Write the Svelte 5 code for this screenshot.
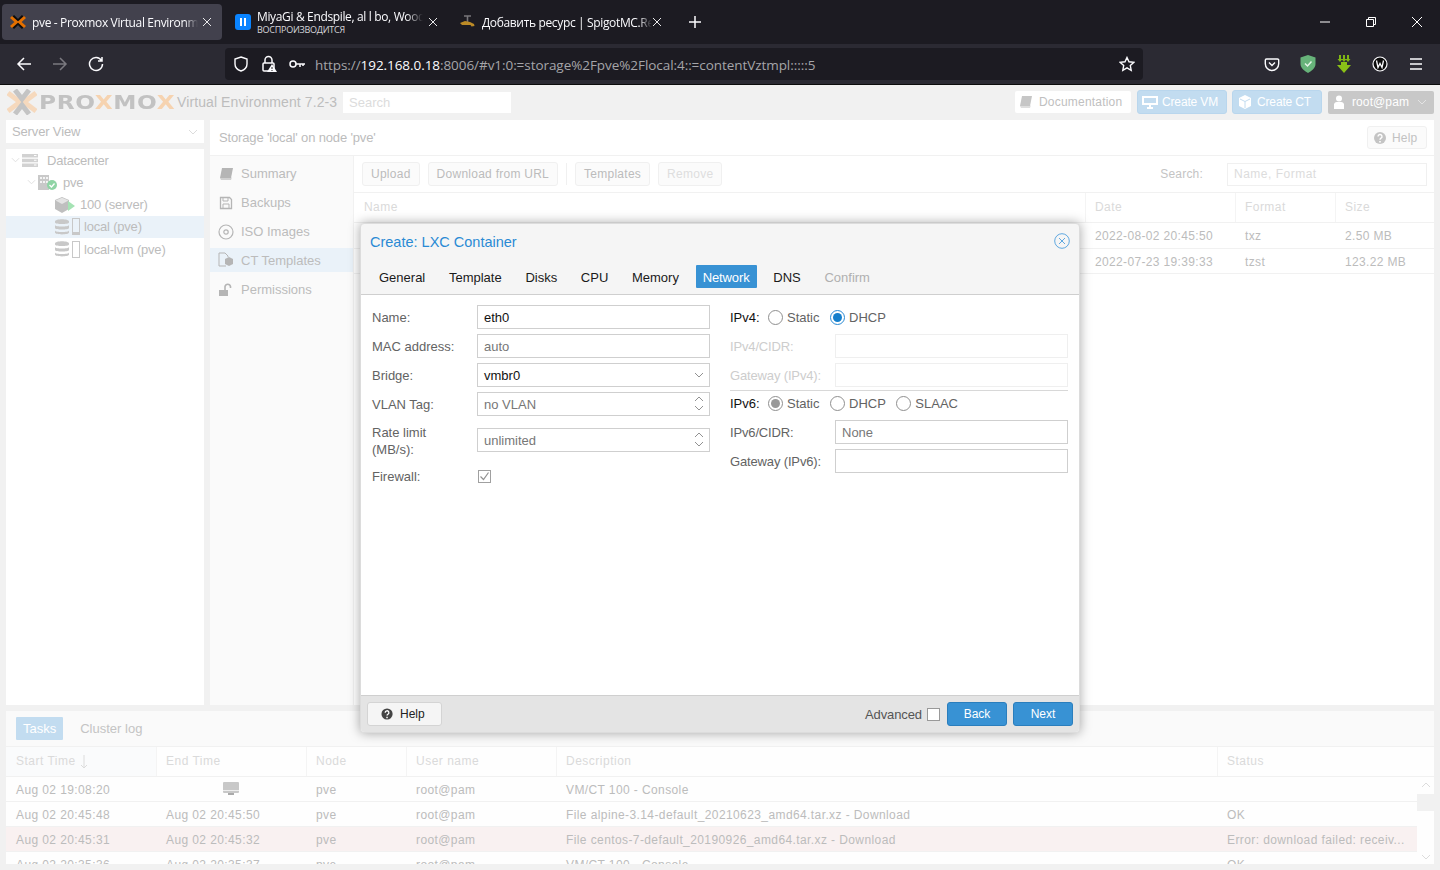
<script>
  const navItems = [
    { t: 'Summary', i: 'book' }, { t: 'Backups', i: 'save' }, { t: 'ISO Images', i: 'disc' },
    { t: 'CT Templates', i: 'tpl', on: true }, { t: 'Permissions', i: 'unlock' }
  ];
  const tasks = [
    ['Aug 02 19:08:20', '', 'pve', 'root@pam', 'VM/CT 100 - Console', '', ''],
    ['Aug 02 20:45:48', 'Aug 02 20:45:50', 'pve', 'root@pam', 'File alpine-3.14-default_20210623_amd64.tar.xz - Download', 'OK', ''],
    ['Aug 02 20:45:31', 'Aug 02 20:45:32', 'pve', 'root@pam', 'File centos-7-default_20190926_amd64.tar.xz - Download', 'Error: download failed: receiv...', 'err'],
    ['Aug 02 20:35:36', 'Aug 02 20:35:37', 'pve', 'root@pam', 'VM/CT 100 - Console', 'OK', '']
  ];
  const tabs = ['General', 'Template', 'Disks', 'CPU', 'Memory', 'Network', 'DNS', 'Confirm'];
</script>

<div class="root">
  <div class="tabstrip">
    <div class="tab active">
      <svg class="fav" viewBox="0 0 16 14"><path d="M3 1l5 5 5-5M3 13l5-5 5 5" fill="none" stroke="#0d0d0d" stroke-width="3"/><path d="M1 2l5.500 5L1 12M15 2L9.500 7l5.500 5" fill="none" stroke="#e57000" stroke-width="3"/></svg>
      <span class="tabtext">pve - Proxmox Virtual Environment</span>
      <svg class="x" viewBox="0 0 10 10"><path d="M1 1l8 8M9 1L1 9" stroke="#e8e8ea"/></svg>
    </div>
    <div class="tab two">
      <svg class="fav" viewBox="0 0 16 16"><rect width="16" height="16" rx="3" fill="#0a84ff"/><path d="M5 4h2v8H5zM9 4h2v8H9z" fill="#fff"/></svg>
      <div class="tabcol">
        <span class="tabtext">MiyaGi &amp; Endspile, al l bo, Woodie</span>
        <span class="sub">ВОСПРОИЗВОДИТСЯ</span>
      </div>
      <svg class="x" viewBox="0 0 10 10"><path d="M1 1l8 8M9 1L1 9" stroke="#e8e8ea"/></svg>
    </div>
    <div class="tab three">
      <svg class="fav" viewBox="0 0 16 14"><path d="M5 1h7M8.500 1v6" fill="none" stroke="#77767a" stroke-width="1.600"/><path d="M1 8l5-2 5 1 4 2 .5 2-3 .5-1-1.500H3z" fill="#bb8a26"/></svg>
      <span class="tabtext">Добавить ресурс | SpigotMC.Resource</span>
      <svg class="x" viewBox="0 0 10 10"><path d="M1 1l8 8M9 1L1 9" stroke="#e8e8ea"/></svg>
    </div>
    <svg class="plus" viewBox="0 0 14 14"><path d="M7 1v12M1 7h12" stroke="#fbfbfe" stroke-width="1.5"/></svg>
    <div class="winbtns">
      <svg viewBox="0 0 12 12"><path d="M1 6h10" stroke="#fff"/></svg>
      <svg viewBox="0 0 12 12"><path d="M1.5 3.5h7v7h-7zM3.5 3.5v-2h7v7h-2" fill="none" stroke="#fff"/></svg>
      <svg viewBox="0 0 12 12"><path d="M1 1l10 10M11 1L1 11" stroke="#fff"/></svg>
    </div>
  </div>

  <div class="navbar">
    <div class="navleft">
      <svg viewBox="0 0 16 16"><path d="M15 8H2M8 2L2 8l6 6" fill="none" stroke="#fbfbfe" stroke-width="1.5"/></svg>
      <svg viewBox="0 0 16 16"><path d="M1 8h13M8 2l6 6-6 6" fill="none" stroke="#7b7a80" stroke-width="1.5"/></svg>
      <svg viewBox="0 0 16 16"><path d="M13.5 4.5A6.5 6.5 0 1 0 14.5 8M14 1v4h-4" fill="none" stroke="#fbfbfe" stroke-width="1.5"/></svg>
    </div>
    <div class="urlbar">
      <svg class="u1" viewBox="0 0 16 16"><path d="M8 1l6 2v5c0 3.500-3 6-6 7-3-1-6-3.500-6-7V3z" fill="none" stroke="#fbfbfe" stroke-width="1.4"/></svg>
      <svg class="u2" viewBox="0 0 16 18"><path d="M4 8V5a3.500 3.500 0 0 1 7 0v3" fill="none" stroke="#fbfbfe" stroke-width="1.5"/><rect x="2" y="8" width="11" height="8" rx="1" fill="none" stroke="#fbfbfe" stroke-width="1.5"/><path d="M11 9l5 8H6z" fill="#fbfbfe"/><path d="M11 12v2M11 15v1" stroke="#222" /></svg>
      <svg class="u3" viewBox="0 0 16 10"><circle cx="4" cy="5" r="3" fill="none" stroke="#fbfbfe" stroke-width="1.5"/><path d="M7 5h9M11 5v3M14 5v2" stroke="#fbfbfe" stroke-width="1.5"/></svg>
      <div class="url">https://<b>192.168.0.18</b>:8006/#v1:0:=storage%2Fpve%2Flocal:4::=contentVztmpl:::::5</div>
      <svg class="star" viewBox="0 0 16 16"><path d="M8 1.500l2 4.300 4.700.6-3.400 3.200.9 4.700L8 11.900l-4.200 2.400.9-4.700L1.300 6.400 6 5.800z" fill="none" stroke="#fbfbfe" stroke-width="1.400"/></svg>
    </div>
    <div class="navright">
      <svg viewBox="0 0 16 16"><path d="M2.500 3h11a1.200 1.200 0 0 1 1.200 1.200v3.600a6.700 6.700 0 0 1-13.400 0V4.200A1.200 1.200 0 0 1 2.500 3z" fill="none" stroke="#fbfbfe" stroke-width="1.400"/><path d="M5 6.500l3 3 3-3" fill="none" stroke="#fbfbfe" stroke-width="1.400"/></svg>
      <svg class="tallic" viewBox="0 0 16 18"><path d="M8 0l7.500 2.500V9c0 4-4.500 7.500-7.500 9-3-1.500-7.500-5-7.500-9V2.500z" fill="#67b37a"/><path d="M5 8.500l2.500 2.500L11.500 6.500" fill="none" stroke="#e4f4e7" stroke-width="1.500"/></svg>
      <svg class="tallic" viewBox="0 0 16 18"><path d="M3 0h2v4h1.500L4 7 1.500 4H3zM7 0h2v4h1.500L8 7 5.500 4H7zM11 0h2v4h1.500L12 7 9.500 4H11z" fill="#7fb514"/><path d="M5 7h6v3h4l-7 8-7-8h4z" fill="#8ac017"/></svg>
      <svg viewBox="0 0 16 16"><circle cx="8" cy="8" r="7" fill="#0b0b0b" stroke="#fbfbfe" stroke-width="1.200"/><path d="M4.500 4.500l1.500 7 2-4 2 4 1.500-7" fill="none" stroke="#fbfbfe" stroke-width="1.300"/></svg>
      <svg viewBox="0 0 16 16"><path d="M2 3h12M2 8h12M2 13h12" stroke="#fbfbfe" stroke-width="1.500"/></svg>
    </div>
  </div>

  <div class="app">
    <header class="head">
      <svg class="bigx" viewBox="0 0 30 26"><path d="M1 4l12 9-12 9M29 4l-12 9 12 9" fill="none" stroke="#f6d9bd" stroke-width="5"/><path d="M8 1l7 9 7-9M8 25l7-9 7 9" fill="none" stroke="#c4c4c4" stroke-width="5"/></svg>
      <div class="logobox"><div class="logo">PRO<i>X</i>MO<i>X</i></div></div>
      <div class="ver">Virtual Environment 7.2-3</div>
      <div class="hsearch">Search</div>
      <div class="spacer"></div>
      <div class="docbtn">
        <svg viewBox="0 0 14 14"><path d="M3 1h10l-2 10H1z" fill="#c6c6c6"/><path d="M1 11h10l1-1-1 3H2z" fill="#dedede"/></svg>
        Documentation
      </div>
      <div class="bluebtn cvm">
        <svg viewBox="0 0 16 14"><path d="M0 1h16v9H0z" fill="#fff"/><path d="M2 3h12v5H2z" fill="#c2dcf0"/><path d="M5 12h6v2H5zM7 10h2v2H7z" fill="#fff"/></svg>
        Create VM
      </div>
      <div class="bluebtn cct">
        <svg viewBox="0 0 14 14"><path d="M7 0l6 3v8l-6 3-6-3V3z" fill="#fff"/><path d="M7 6.500L2 4M7 6.500l5-2.500M7 6.500V13" stroke="#c2dcf0"/></svg>
        Create CT
      </div>
      <div class="userbtn">
        <svg viewBox="0 0 12 14"><circle cx="6" cy="3.500" r="3" fill="#fff"/><path d="M1 14V9a3 3 0 0 1 3-2h4a3 3 0 0 1 3 2v5z" fill="#fff"/></svg>
        root@pam
        <svg class="chev" viewBox="0 0 10 6"><path d="M1 1l4 4 4-4" fill="none" stroke="#e4e4e4"/></svg>
      </div>
    </header>

    <div class="main">
      <aside class="side">
        <div class="viewsel">Server View<svg viewBox="0 0 10 6"><path d="M1 1l4 4 4-4" fill="none" stroke="#dcdcdc"/></svg></div>
        <div class="tree">
          <div class="node n0">
            <svg class="tw" viewBox="0 0 10 6"><path d="M1 1l4 4 4-4" fill="none" stroke="#ddd"/></svg>
            <svg class="ic" viewBox="0 0 16 13"><path d="M0 0h16v3.500H0zM0 4.700h16v3.500H0zM0 9.400h16v3.500H0z" fill="#d2d2d2"/><path d="M12 1h2.500v1H12zM12 5.700h2.500v1H12zM12 10.400h2.500v1H12z" fill="#fff"/></svg>
            <span class="dc">Datacenter</span>
          </div>
          <div class="node n1">
            <svg class="tw" viewBox="0 0 10 6"><path d="M1 1l4 4 4-4" fill="none" stroke="#ddd"/></svg>
            <svg class="ic pv" viewBox="0 0 20 16"><path d="M0 1h11v15H0z" fill="#c9c9c9"/><path d="M2 3h2v2H2zM5 3h2v2H5zM8 3h2v2H8zM2 7h2v2H2zM5 7h2v2H5zM8 7h2v2H8z" fill="#f4f4f4"/><circle cx="14" cy="11" r="5" fill="#8fd4a5"/><path d="M11.500 11l2 2 3-3.500" fill="none" stroke="#fff" stroke-width="1.300"/></svg>
            <span>pve</span>
          </div>
          <div class="node n2">
            <svg class="ic" viewBox="0 0 22 16"><path d="M8 0l7 3v9l-7 4-7-4V3z" fill="#bfbfbf"/><path d="M8 7L1.500 3.500 8 .8l6.500 2.700z" fill="#e4e4e4"/><path d="M14 4l7 5-7 5z" fill="#a5e3b4"/></svg>
            <span>100 (server)</span>
          </div>
          <div class="node n3 sel">
            <svg class="ic" viewBox="0 0 14 16"><path d="M0 2.500c0-3 14-3 14 0v1c0 2-14 2-14 0zM0 6c0 2 14 2 14 0v3c0 2-14 2-14 0zM0 11.500c0 2 14 2 14 0v2c0 2.500-14 2.500-14 0z" fill="#c8c8c8"/></svg>
            <span class="st"><span class="fill"></span></span>
            <span>local (pve)</span>
          </div>
          <div class="node n3">
            <svg class="ic" viewBox="0 0 14 16"><path d="M0 2.500c0-3 14-3 14 0v1c0 2-14 2-14 0zM0 6c0 2 14 2 14 0v3c0 2-14 2-14 0zM0 11.500c0 2 14 2 14 0v2c0 2.500-14 2.500-14 0z" fill="#c8c8c8"/></svg>
            <span class="st"></span>
            <span>local-lvm (pve)</span>
          </div>
        </div>
      </aside>

      <section class="center">
        <div class="titlebar">
          <span>Storage 'local' on node 'pve'</span>
          <div class="helpbtn">
            <svg viewBox="0 0 14 14"><circle cx="7" cy="7" r="6" fill="#c4c4c4"/><path d="M5 5.500a2 2 0 1 1 3 1.700c-.7.400-1 .8-1 1.500" fill="none" stroke="#fff" stroke-width="1.400"/><path d="M6.200 10h1.600v1.500H6.200z" fill="#fff"/></svg>
            Help
          </div>
        </div>
        <div class="body">
          <nav class="snav">
            {#each navItems as n}
              <div class="sitem" class:on={n.on}>
                <svg viewBox="0 0 16 16">
                  {#if n.i === 'book'}
                    <path d="M4 2h11l-2 10H2z" fill="#b5b5b5"/><path d="M2 12h11l1-1-1 3H3z" fill="#d0d0d0"/>
                  {:else if n.i === 'save'}
                    <path d="M2.500 2.500h9l2 2v9h-11z" fill="none" stroke="#b5b5b5" stroke-width="1.300"/><path d="M5 3v3h5V3M5 13V9h6v4" fill="none" stroke="#b5b5b5"/>
                  {:else if n.i === 'disc'}
                    <circle cx="8" cy="8" r="7" fill="none" stroke="#b5b5b5" stroke-width="1.200"/><circle cx="8" cy="8" r="2.200" fill="none" stroke="#b5b5b5" stroke-width="1.200"/>
                  {:else if n.i === 'tpl'}
                    <path d="M1 1h6l3 3v1M1 1v13h7" fill="none" stroke="#b5b5b5"/><path d="M11 5l4 2v5l-4 2-4-2V7z" fill="#b5b5b5"/>
                  {:else}
                    <path d="M1 8h9v6H1z" fill="#b5b5b5"/><path d="M7 8V4.500a2.800 2.800 0 0 1 5.500 0V6" fill="none" stroke="#b5b5b5" stroke-width="1.600"/>
                  {/if}
                </svg>
                <span>{n.t}</span>
              </div>
            {/each}
          </nav>
          <div class="store">
            <div class="tools">
              <div class="tbtn">Upload</div>
              <div class="tbtn">Download from URL</div>
              <div class="tsep"></div>
              <div class="tbtn">Templates</div>
              <div class="tbtn dim">Remove</div>
              <div class="spacer"></div>
              <span class="slabel">Search:</span>
              <div class="sfield">Name, Format</div>
            </div>
            <div class="sgrid ghead"><div>Name</div><div>Date</div><div>Format</div><div>Size</div></div>
            <div class="sgrid grow"><div></div><div>2022-08-02 20:45:50</div><div>txz</div><div>2.50 MB</div></div>
            <div class="sgrid grow"><div></div><div>2022-07-23 19:39:33</div><div>tzst</div><div>123.22 MB</div></div>
          </div>
        </div>
      </section>
    </div>

    <section class="tasks">
      <div class="ttabs"><span class="ttab on">Tasks</span><span class="ttab">Cluster log</span></div>
      <div class="tgrid thead">
        <div class="sorted">Start Time <svg viewBox="0 0 8 14"><path d="M4 0v13M1 10l3 3 3-3" fill="none" stroke="#dcdcdc"/></svg></div>
        <div>End Time</div><div>Node</div><div>User name</div><div>Description</div><div>Status</div>
      </div>
      <div class="tbody">
        <div class="rows">
          {#each tasks as r, i}
            <div class="tgrid trow" class:err={r[6] === 'err'}>
              <div>{r[0]}</div>
              <div class="endc">
                {#if i === 0}
                  <svg class="mon" viewBox="0 0 16 14"><path d="M1 0h14a1 1 0 0 1 1 1v9a1 1 0 0 1-1 1H1a1 1 0 0 1-1-1V1a1 1 0 0 1 1-1z" fill="#c8c8c8"/><path d="M0 8.500h16" stroke="#eee"/><path d="M5 11h6v2H5z" fill="#aaa"/></svg>
                {:else}{r[1]}{/if}
              </div>
              <div>{r[2]}</div><div>{r[3]}</div><div>{r[4]}</div><div>{r[5]}</div>
            </div>
          {/each}
        </div>
        <div class="sbar">
          <svg viewBox="0 0 10 6"><path d="M1 5l4-4 4 4" fill="none" stroke="#dcdcdc"/></svg>
          <div class="thumb"></div>
          <div class="spacer"></div>
          <svg viewBox="0 0 10 6"><path d="M1 1l4 4 4-4" fill="none" stroke="#dcdcdc"/></svg>
        </div>
      </div>
    </section>
  </div>

  <div class="modal">
    <div class="mtitle">
      <span>Create: LXC Container</span>
      <svg viewBox="0 0 16 16"><circle cx="8" cy="8" r="7.300" fill="none" stroke="#5fa8e0"/><path d="M5 5l6 6M11 5l-6 6" stroke="#5fa8e0"/></svg>
    </div>
    <div class="mtabs">
      {#each tabs as t}
        <span class="mtab" class:on={t === 'Network'} class:off={t === 'Confirm'}>{t}</span>
      {/each}
    </div>
    <div class="mbody">
      <div class="col left">
        <div class="frow"><label>Name:</label><div class="inp dark">eth0</div></div>
        <div class="frow"><label>MAC address:</label><div class="inp">auto</div></div>
        <div class="frow"><label>Bridge:</label><div class="inp dark">vmbr0<svg class="dn" viewBox="0 0 10 6"><path d="M1 1l4 4 4-4" fill="none" stroke="#919191"/></svg></div></div>
        <div class="frow"><label>VLAN Tag:</label><div class="inp">no VLAN<svg class="spin" viewBox="0 0 10 15"><path d="M1 5l4-4 4 4M1 10l4 4 4-4" fill="none" stroke="#919191"/></svg></div></div>
        <div class="frow tall"><label>Rate limit<br>(MB/s):</label><div class="inp">unlimited<svg class="spin" viewBox="0 0 10 15"><path d="M1 5l4-4 4 4M1 10l4 4 4-4" fill="none" stroke="#919191"/></svg></div></div>
        <div class="frow fw"><label>Firewall:</label><svg class="chk" viewBox="0 0 13 13"><rect x=".5" y=".5" width="12" height="12" fill="#fff" stroke="#a0a0a0"/><path d="M2.500 6.500l3 3 5-7" fill="none" stroke="#919191" stroke-width="1.200"/></svg></div>
      </div>
      <div class="col right">
        <div class="rrow">
          <span class="iplab">IPv4:</span>
          <span class="radio"></span><span class="rt">Static</span>
          <span class="radio blue"></span><span class="rt">DHCP</span>
        </div>
        <div class="frow2 dis"><label>IPv4/CIDR:</label><div class="inp2"></div></div>
        <div class="frow2 dis"><label>Gateway (IPv4):</label><div class="inp2"></div></div>
        <div class="hr"></div>
        <div class="rrow six">
          <span class="iplab">IPv6:</span>
          <span class="radio gray"></span><span class="rt">Static</span>
          <span class="radio"></span><span class="rt">DHCP</span>
          <span class="radio"></span><span class="rt">SLAAC</span>
        </div>
        <div class="frow2"><label>IPv6/CIDR:</label><div class="inp2">None</div></div>
        <div class="frow2"><label>Gateway (IPv6):</label><div class="inp2"></div></div>
      </div>
    </div>
    <div class="mfoot">
      <div class="mhelp">
        <svg viewBox="0 0 14 14"><circle cx="6.500" cy="6.500" r="6" fill="#444"/><path d="M4.500 5a2 2 0 1 1 3 1.700c-.7.400-1 .8-1 1.500" fill="none" stroke="#fff" stroke-width="1.400"/><path d="M5.700 9.500h1.600V11H5.700z" fill="#fff"/></svg>
        Help
      </div>
      <div class="spacer"></div>
      <span class="adv">Advanced</span>
      <span class="advbox"></span>
      <div class="pbtn back">Back</div>
      <div class="pbtn">Next</div>
    </div>
  </div>
</div>

<style>
  :global(body) { margin: 0; background: #f1f1f1; }
  .root { position: relative; width: 1440px; height: 870px; overflow: hidden; font-family: "Liberation Sans", Arial, sans-serif; font-size: 13px; }
  svg { display: block; flex: none; }
  .spacer { flex: 1; }

  .tabstrip { height: 44px; background: #1c1b22; display: flex; align-items: center; box-sizing: border-box; font-family: "Open Sans", sans-serif; color: #fbfbfe; font-size: 12px; }
  .tab { height: 36px; box-sizing: border-box; display: flex; align-items: center; position: relative; }
  .tab.active { margin-left: 2px; width: 220px; background: #42414d; border-radius: 4px; padding-left: 8px; }
  .tab.two { width: 227px; padding-left: 13px; }
  .tab.three { width: 222px; padding-left: 10px; }
  .fav { width: 16px; height: 16px; margin-right: 6px; }
  .tab.three .fav { margin-right: 7px; }
  .tabtext { display: block; white-space: nowrap; overflow: hidden; letter-spacing: -.35px; }
  .active .tabtext { width: 166px; -webkit-mask-image: linear-gradient(90deg, #000 92%, transparent); mask-image: linear-gradient(90deg, #000 92%, transparent); }
  .two .tabtext { width: 166px; line-height: 14px; -webkit-mask-image: linear-gradient(90deg, #000 90%, transparent); mask-image: linear-gradient(90deg, #000 90%, transparent); }
  .three .tabtext { width: 170px; letter-spacing: -.35px; -webkit-mask-image: linear-gradient(90deg, #000 92%, transparent); mask-image: linear-gradient(90deg, #000 92%, transparent); }
  .tabcol { display: flex; flex-direction: column; }
  .sub { font-size: 9px; line-height: 11px; letter-spacing: -.25px; color: #d5d5d9; }
  .x { width: 10px; height: 10px; margin-left: 4px; }
  .two .x { margin-left: 5px; }
  .three .x { margin-left: 0; }
  .plus { width: 14px; height: 14px; margin-left: 17px; }
  .winbtns { margin-left: auto; display: flex; gap: 34px; padding-right: 17px; }
  .winbtns svg { width: 12px; height: 12px; }

  .navbar { height: 40px; background: #2b2a33; display: flex; align-items: center; border-bottom: 1px solid #0c0c0d; box-sizing: content-box; }
  .navleft { display: flex; gap: 20px; padding-left: 16px; width: 225px; box-sizing: border-box; }
  .navleft svg { width: 16px; height: 16px; }
  .urlbar { width: 918px; height: 32px; background: #1c1b22; border-radius: 4px; display: flex; align-items: center; box-sizing: border-box; padding-left: 8px; color: #a5a5a9; font-family: "Open Sans", sans-serif; font-size: 13.500px; }
  .u1 { width: 16px; height: 16px; margin-right: 12px; }
  .u2 { width: 16px; height: 18px; margin-right: 12px; }
  .u3 { width: 16px; height: 10px; margin-right: 10px; }
  .url { white-space: nowrap; letter-spacing: -.06px; flex: 1; padding-top: 1px; }
  .url b { font-weight: 400; color: #fbfbfe; }
  .star { width: 16px; height: 16px; margin-right: 8px; }
  .navright { display: flex; gap: 20px; margin-left: 121px; align-items: center; }
  .navright svg { width: 16px; height: 16px; }
  .navright .tallic { height: 18px; }

  .app { height: 785px; background: #f1f1f1; color: #b9b9b9; display: flex; flex-direction: column; }
  .head { height: 34px; display: flex; align-items: center; padding: 0 6px 0 7px; box-sizing: border-box; }
  .bigx { width: 30px; height: 26px; margin-right: 3px; }
  .logobox { width: 137px; flex: none; overflow: visible; }
  .logo { font-family: "DejaVu Sans", sans-serif; font-weight: 700; font-size: 19px; color: #c2c2c2; letter-spacing: .5px; width: 110px; margin-left: -1px; white-space: nowrap; transform: scaleX(1.225); transform-origin: left; }
  .logo i { font-style: normal; color: #f6d3b0; }
  .ver { font-size: 14px; color: #bdbdbd; width: 166px; white-space: nowrap; letter-spacing: .1px; }
  .hsearch { width: 168px; height: 21px; background: #fff; color: #dcdcdc; font-size: 13px; line-height: 21px; padding-left: 6px; box-sizing: border-box; }
  .docbtn { height: 22px; width: 116px; background: #fff; border-radius: 2px; display: flex; align-items: center; gap: 6px; padding-left: 4px; box-sizing: border-box; color: #c0c0c0; font-size: 12px; letter-spacing: .2px; margin-right: 6px; }
  .docbtn svg { width: 14px; height: 14px; }
  .bluebtn { height: 24px; width: 90px; background: #c2dcf0; border: 1px solid #b9d6ed; border-radius: 3px; box-sizing: border-box; display: flex; align-items: center; gap: 4px; padding-left: 4px; color: #fff; font-size: 12px; letter-spacing: -.15px; margin-right: 5px; white-space: nowrap; }
  .bluebtn svg { width: 16px; height: 14px; }
  .cct { margin-right: 6px; }
  .userbtn { height: 23px; width: 106px; background: #c8c8c8; border-radius: 2px; display: flex; align-items: center; gap: 7px; padding-left: 5px; box-sizing: border-box; color: #fff; font-size: 12px; letter-spacing: .1px; }
  .userbtn svg { width: 12px; height: 14px; }
  .userbtn .chev { width: 10px; height: 6px; margin-left: 1px; }

  .main { height: 586px; display: flex; padding: 1px 6px 0 6px; gap: 6px; box-sizing: border-box; }
  .side { width: 198px; display: flex; flex-direction: column; gap: 6px; }
  .viewsel { height: 23px; background: #fff; display: flex; align-items: center; justify-content: space-between; padding: 0 6px; box-sizing: border-box; color: #bcbcbc; letter-spacing: -.15px; }
  .viewsel svg { width: 10px; height: 6px; }
  .tree { flex: 1; background: #fff; color: #bcbcbc; height: 556px; letter-spacing: -.2px; }
  .node { height: 22.250px; display: flex; align-items: center; white-space: nowrap; }
  .tree .tw { width: 9px; height: 6px; }
  .n0 { padding-left: 5px; }
  .n0 .ic { width: 16px; height: 13px; margin: 0 9px 0 2px; }
  .n1 { padding-left: 21px; }
  .n1 .ic { width: 20px; height: 16px; margin: 0 5px 0 2px; }
  .n2 { padding-left: 48px; }
  .n2 .ic { width: 22px; height: 16px; margin-right: 4px; }
  .n3 { padding-left: 49px; }
  .n3 .ic { width: 14px; height: 16px; margin-right: 3px; }
  .sel { background: #eaf2f9; }
  .st { width: 6px; height: 15px; border: 1px solid #c8c8c8; margin-right: 4px; position: relative; display: block; box-sizing: content-box; }
  .fill { position: absolute; left: 0; right: 0; bottom: 0; height: 2px; background: #c8c8c8; }

  .center { flex: 1; background: #fff; display: flex; flex-direction: column; min-width: 0; }
  .titlebar { height: 36px; display: flex; align-items: center; justify-content: space-between; padding: 0 7px 0 9px; border-bottom: 1px solid #f1f1f1; box-sizing: border-box; font-size: 13px; color: #bcbcbc; letter-spacing: -.15px; }
  .helpbtn { width: 60px; height: 23px; border: 1px solid #f0f0f0; border-radius: 3px; background: #fbfbfb; box-sizing: border-box; display: flex; align-items: center; gap: 5px; padding-left: 5px; font-size: 12px; letter-spacing: .2px; color: #c2c2c2; }
  .helpbtn svg { width: 14px; height: 14px; }
  .body { flex: 1; display: flex; }
  .snav { width: 144px; flex: none; background: #fafafa; border-right: 1px solid #f1f1f1; box-sizing: border-box; padding-top: 3px; }
  .sitem { height: 29px; display: flex; align-items: center; padding-left: 8px; gap: 7px; color: #bcbcbc; }
  .sitem svg { width: 16px; height: 16px; }
  .sitem.on { background: #eaf2f9; height: 24px; margin: 2px 0 3px; }
  .store { flex: 1; min-width: 0; }
  .tools { height: 37px; display: flex; align-items: center; padding: 0 7px 0 8px; gap: 8px; border-bottom: 1px solid #f1f1f1; box-sizing: border-box; }
  .tbtn { height: 24px; border: 1px solid #f0f0f0; border-radius: 3px; background: #fbfbfb; box-sizing: border-box; padding: 0 8px; line-height: 22px; font-size: 12px; letter-spacing: .26px; color: #bcbcbc; }
  .tbtn.dim { color: #dedede; }
  .tsep { width: 1px; height: 22px; background: #f0f0f0; }
  .slabel { color: #c4c4c4; font-size: 12px; letter-spacing: .2px; margin-right: 16px; }
  .sfield { width: 200px; height: 23px; border: 1px solid #f0f0f0; box-sizing: border-box; line-height: 21px; padding-left: 6px; color: #dcdcdc; font-size: 12px; letter-spacing: .5px; }
  .sgrid { display: grid; grid-template-columns: 731px 150px 100px 100px; }
  .sgrid > div { padding-left: 10px; box-sizing: border-box; white-space: nowrap; }
  .ghead { height: 30px; line-height: 29px; background: #fff; border-bottom: 1px solid #f1f1f1; box-sizing: border-box; color: #dadada; font-size: 12px; letter-spacing: .45px; }
  .ghead > div + div { border-left: 1px solid #f4f4f4; padding-left: 9px; }
  .grow { height: 25.500px; padding-top: 2px; line-height: 23px; border-bottom: 1px solid #f1f1f1; box-sizing: border-box; color: #bcbcbc; font-size: 12px; letter-spacing: .35px; }

  .tasks { margin: 6px 6px 0; height: 153px; background: #fefefe; overflow: hidden; display: flex; flex-direction: column; flex: none; }
  .ttabs { height: 36px; flex: none; background: #fafafa; border-bottom: 1px solid #f1f1f1; display: flex; align-items: center; padding: 0 0 0 10px; gap: 11px; box-sizing: border-box; }
  .ttab { height: 23px; padding: 0 6px; line-height: 23px; font-size: 13px; color: #c4c4c4; }
  .ttab.on { background: #c2dcf0; color: #fff; border-radius: 1px; padding: 0 7px; }
  .tgrid { display: grid; grid-template-columns: 150px 150px 100px 150px 661px 200px; }
  .tgrid > div { padding-left: 10px; box-sizing: border-box; white-space: nowrap; overflow: hidden; }
  .thead { height: 30px; flex: none; line-height: 29px; border-bottom: 1px solid #f1f1f1; box-sizing: border-box; color: #dadada; font-size: 12px; letter-spacing: .5px; padding-right: 17px; }
  .thead > div + div { border-left: 1px solid #f4f4f4; padding-left: 9px; }
  .sorted { background: #fafbfc; display: flex; align-items: center; gap: 4px; }
  .sorted svg { width: 8px; height: 14px; }
  .tbody { flex: 1; display: flex; min-height: 0; overflow: hidden; }
  .rows { width: 1411px; }
  .trow { height: 25px; padding-top: 2px; line-height: 22px; border-bottom: 1px solid #f1f1f1; box-sizing: border-box; color: #bcbcbc; font-size: 12px; letter-spacing: .4px; }
  .trow.err { background: #f9f1f1; }
  .endc { display: flex; align-items: center; justify-content: flex-start; }
  .mon { width: 16px; height: 14px; margin-left: 57px; margin-top: -3px; }
  .sbar { width: 17px; display: flex; flex-direction: column; align-items: center; padding: 5px 0 4px; box-sizing: border-box; }
  .sbar svg { width: 10px; height: 6px; }
  .thumb { width: 17px; height: 17px; background: #f1f1f1; margin-top: 6px; }

  .modal { position: absolute; left: 360px; top: 223px; width: 720px; height: 510px; background: #f5f5f5; border: 1px solid #dcdcdc; border-radius: 4px; box-shadow: 0 0 12px rgba(0, 0, 0, .35); box-sizing: border-box; display: flex; flex-direction: column; }
  .mtitle { height: 37px; padding: 0 9px 2px 9px; box-sizing: border-box; display: flex; align-items: center; justify-content: space-between; color: #2a8ad4; font-size: 14.500px; flex: none; }
  .mtitle svg { width: 16px; height: 16px; margin-top: -2px; }
  .mtabs { height: 33px; display: flex; align-items: flex-start; padding: 4px 0 0 11px; box-sizing: border-box; flex: none; }
  .mtab { height: 23px; line-height: 25px; padding: 0 7px; color: #1a1a1a; font-size: 13px; border-radius: 1px; margin-right: 9.700px; }
  .mtab.on { background: #3892d4; color: #fff; letter-spacing: -.1px; }
  .mtab.off { color: #b0b0b0; }
  .mbody { flex: 1; min-height: 0; background: #fff; border-top: 1px solid #cfcfcf; border-bottom: 1px solid #cfcfcf; display: flex; padding: 10px 10px 0 11px; box-sizing: border-box; color: #636363; }
  .col.left { width: 338px; margin-right: 20px; flex: none; }
  .col.right { width: 338px; flex: none; }
  .col.right label { letter-spacing: -.15px; }
  label { display: block; font-size: 13px; line-height: 17px; }
  .frow { height: 24px; display: grid; grid-template-columns: 105px 233px; align-items: center; margin-bottom: 5px; }
  .frow.tall { height: 36px; margin-top: 6px; margin-bottom: 6px; }
  .frow.tall label { padding-top: 2px; }
  .frow.fw { margin-bottom: 0; height: 24px; }
  .inp { height: 24px; border: 1px solid #cfcfcf; box-sizing: border-box; line-height: 24px; padding-left: 6px; font-size: 13px; color: #777; position: relative; }
  .inp.dark { color: #111; }
  .dn { position: absolute; right: 5px; top: 8px; width: 10px; height: 6px; }
  .spin { position: absolute; right: 5px; top: 3px; width: 10px; height: 15px; }
  .chk { width: 13px; height: 13px; margin-left: 1px; }
  .rrow { height: 24px; display: flex; align-items: center; font-size: 13px; }
  .iplab { color: #111; width: 38px; }
  .radio { width: 13px; height: 13px; border: 1px solid #8f8f8f; border-radius: 50%; background: #fff; margin-right: 4px; position: relative; display: block; }
  .rt { margin-right: 10.500px; }
  .radio.blue { border-color: #2a8ad4; }
  .radio.blue::after { content: ""; position: absolute; inset: 2px; border-radius: 50%; background: #157fcc; }
  .radio.gray::after { content: ""; position: absolute; inset: 2px; border-radius: 50%; background: #999; }
  .frow2 { height: 24px; display: grid; grid-template-columns: 105px 233px; align-items: center; margin-top: 5px; }
  .inp2 { height: 24px; border: 1px solid #cfcfcf; box-sizing: border-box; line-height: 23px; padding-left: 6px; font-size: 13px; color: #777; }
  .dis { color: #cdcdcd; }
  .dis .inp2 { border-color: #efefef; }
  .hr { height: 1px; background: #d8d8d8; margin-top: 3px; }
  .mfoot { height: 36px; flex: none; background: #e4e4e4; display: flex; align-items: center; padding: 0 6px; box-sizing: border-box; border-radius: 0 0 4px 4px; }
  .mhelp { width: 75px; height: 24px; background: #f5f5f5; border: 1px solid #d4d4d4; border-radius: 3px; box-sizing: border-box; display: flex; align-items: center; gap: 6px; padding-left: 13px; font-size: 12px; color: #222; }
  .mhelp svg { width: 13px; height: 13px; }
  .adv { color: #555; font-size: 13px; margin-right: 5px; letter-spacing: -.1px; }
  .advbox { width: 13px; height: 13px; border: 1px solid #999; background: #fff; box-sizing: border-box; margin-right: 7px; }
  .pbtn { width: 60px; height: 24px; background: #3892d4; border: 1px solid #2a7ebd; border-radius: 3px; box-sizing: border-box; color: #fff; font-size: 12px; text-align: center; line-height: 23px; }
  .back { margin-right: 6px; }
</style>
